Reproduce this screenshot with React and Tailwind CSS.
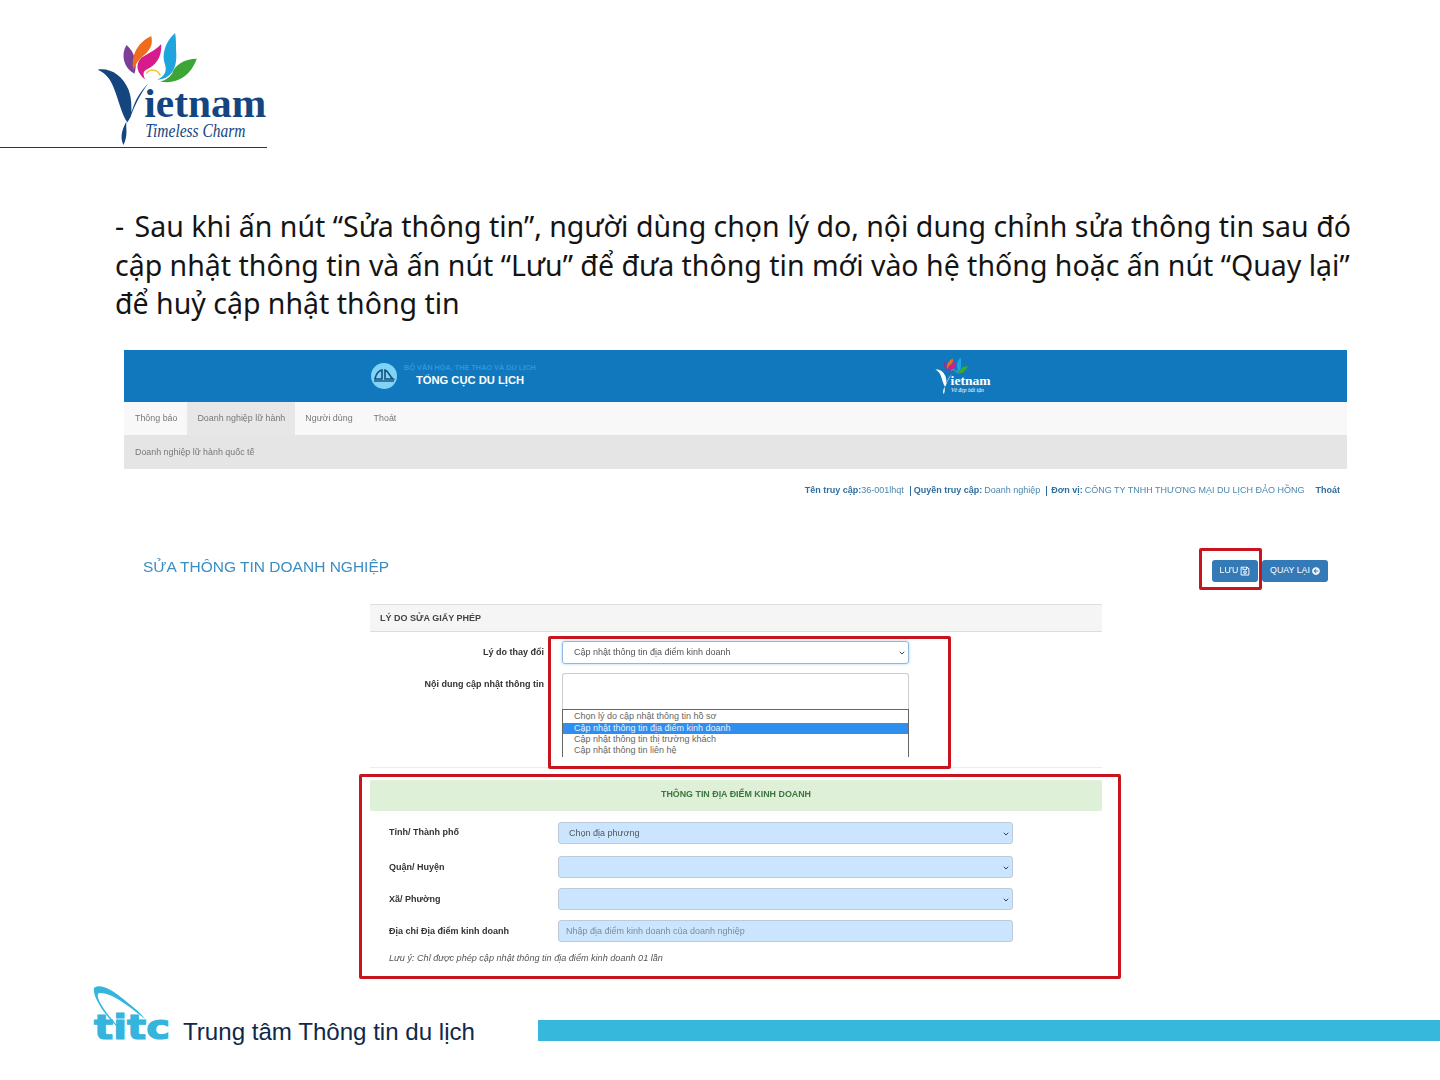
import React from "react";
import { FaArrowCircleLeft, FaRegSave } from "react-icons/fa";
import { ChevronDown } from "lucide-react";

function Petals() {
  return (
    <g>
      <path d="M126 45C120 55 123 68 134 74C137 66 135 52 126 45Z" fill="#7b3f98" />
      <path d="M133 70C130 55 138 42 151 36C153 45 150 50 143 56C138 60 135 65 133 70Z" fill="#ef6c1f" />
      <path d="M145 80C137 74 134 65 141 58C149 53 157 49 161 44C162 58 155 66 146 70C142 72 143 76 145 80Z" fill="#d81b8c" />
      <path d="M175 33C165 42 161 55 165 65C167 72 164 77 157 80C170 80 178 70 176 50C176 43 176 38 175 33Z" fill="#1ea5de" />
      <path d="M197 59C184 59 174 66 172 74C169 78 165 81 160 82C175 85 190 78 197 59Z" fill="#3ba535" />
      <path d="M146 74C150 68 158 70 160 76" fill="none" stroke="#f2c230" strokeWidth="1.6" />
    </g>
  );
}

function Logo({ color, width, height, tagline, tagSize }) {
  return (
    <svg viewBox="96 32 172 116" width={width} height={height} className="block shrink-0">
      <Petals />
      <path d="M97 70C110 68 122 76 128 90C131 98 131 105 131 113C135 100 140 92 148 84C141 93 134 106 130 118L127 123C122 118 118 100 113 88C110 79 104 73 97 70Z" fill={color} />
      <path d="M126 122C125 130 128 135 123 146C120 140 120 133 126 122Z" fill={color} />
      <text x="144" y="118" fontSize="41" fontWeight="700" fontFamily="'Liberation Serif', serif" fill={color} textLength="123" lengthAdjust="spacingAndGlyphs">ietnam</text>
      <text x="145" y="138" fontSize={tagSize} fontStyle="italic" fontFamily="'Liberation Serif', serif" fill={color} textLength="101" lengthAdjust="spacingAndGlyphs">{tagline}</text>
    </svg>
  );
}

function Chevron() {
  return <ChevronDown size={8} strokeWidth={3} className="text-[#334455] shrink-0" />;
}

function GreenRow({ label, className, labelClass, value, input }) {
  return (
    <div className={`flex items-center ${className}`}>
      <div className={`w-[169px] text-[9px] font-bold text-[#333] ${labelClass}`}>{label}</div>
      <div className="flex h-[22px] w-[455px] items-center justify-between rounded-[3px] border border-[#bccad9] bg-[#cce5ff] pr-[2px] pt-[2px] text-[9px]">
        {input ? (
          <span className="pl-[7px] text-[#7d8c9c]">{value}</span>
        ) : (
          <>
            <span className="pl-[10px] text-[#555]">{value}</span>
            <Chevron />
          </>
        )}
      </div>
    </div>
  );
}

export default function App() {
  return (
    <div className="relative h-[1080px] w-[1440px] overflow-hidden bg-white font-['Liberation_Sans',sans-serif]">
      {/* slide header */}
      <div className="h-[148px] w-[267px] border-b border-[#1d3a5c] pl-[96px] pt-[32px]">
        <Logo color="#14457f" width={172} height={115} tagline="Timeless Charm" tagSize="18" />
      </div>

      {/* slide text */}
      <div className="ml-[115px] mt-[59px] font-['Noto_Sans',sans-serif] text-[28.5px] leading-[38.5px] text-[#141414]">
        <div className="whitespace-nowrap"><span className="mr-[3px]">-</span> Sau khi ấn nút “Sửa thông tin”, người dùng chọn lý do, nội dung chỉnh sửa thông tin sau đó</div>
        <div className="whitespace-nowrap">cập nhật thông tin và ấn nút “Lưu” để đưa thông tin mới vào hệ thống hoặc ấn nút “Quay lại”</div>
        <div className="whitespace-nowrap">để huỷ cập nhật thông tin</div>
      </div>

      {/* embedded screenshot */}
      <div className="ml-[124px] mt-[27px] w-[1223px] blur-[0.3px]">
        <div className="flex h-[52px] items-center bg-[#1178be] pl-[247px]">
          <div className="flex h-[26px] w-[26px] shrink-0 items-center justify-center rounded-full bg-[#7ed3f6]">
            <svg viewBox="0 0 26 26" width="26" height="26">
              <path d="M4 16C5 11 7 8 11 7V16ZM14 7C18 8 18 13 22 16H14Z" fill="none" stroke="#14507f" strokeWidth="1.6" />
              <path d="M3 18H23" stroke="#14507f" strokeWidth="1.4" />
            </svg>
          </div>
          <div className="ml-[7px] w-[132px] text-center">
            <div className="whitespace-nowrap text-[7.3px] font-bold leading-[8px] text-[#2a97e0]">BỘ VĂN HÓA, THỂ THAO VÀ DU LỊCH</div>
            <div className="mt-[2px] whitespace-nowrap text-[11.2px] font-bold leading-[13px] text-white">TỔNG CỤC DU LỊCH</div>
          </div>
          <div className="ml-[399px]">
            <Logo color="#ffffff" width={56} height={38} tagline="Vẻ đẹp bất tận" tagSize="16" />
          </div>
        </div>

        <div className="flex h-[33px] items-center bg-[#f8f8f8] text-[8.9px] text-[#777]">
          <div className="flex h-full items-center pl-[11px] pr-[10px] pt-[2px]">Thông báo</div>
          <div className="flex h-full items-center bg-[#e7e7e7] px-[10px] pt-[2px]">Doanh nghiệp lữ hành</div>
          <div className="flex h-full items-center pl-[10px] pr-[11px] pt-[2px]">Người dùng</div>
          <div className="flex h-full items-center px-[10px] pt-[2px]">Thoát</div>
        </div>
        <div className="flex h-[34px] items-center bg-[#e5e5e5] pl-[11px] pt-[2px] text-[8.9px] text-[#777]">Doanh nghiệp lữ hành quốc tế</div>

        <div className="mt-[14px] flex h-[14px] items-center justify-end whitespace-nowrap pr-[7px] pt-[3px] text-[9px] text-[#4a87ad]">
          <span className="font-bold text-[#2f6f9f]">Tên truy cập:</span>
          <span>36-001lhqt</span>
          <span className="ml-[6px] mr-[3px] h-[10px] w-px bg-[#2f6f9f]" />
          <span className="mr-[2px] font-bold text-[#2f6f9f]">Quyền truy cập:</span>
          <span>Doanh nghiệp</span>
          <span className="ml-[6px] mr-[4px] h-[10px] w-px bg-[#2f6f9f]" />
          <span className="mr-[2px] font-bold text-[#2f6f9f]">Đơn vị:</span>
          <span>CÔNG TY TNHH THƯƠNG MẠI DU LỊCH ĐẢO HỒNG</span>
          <span className="ml-[11px] font-bold text-[#2f6f9f]">Thoát</span>
        </div>

        <div className="mt-[63px] flex h-[22px] justify-between pl-[19px] pr-[19px]">
          <div className="mt-[-4px] text-[15.5px] leading-[22px] text-[#3c8dc4]">SỬA THÔNG TIN DOANH NGHIỆP</div>
          <div className="flex gap-[4px]">
            <div className="flex h-[22px] w-[46px] items-center justify-center gap-[2px] rounded-[3px] bg-[#337ab7] text-[8.8px] text-white">
              LƯU <FaRegSave size={10} />
            </div>
            <div className="flex h-[22px] w-[66px] items-center justify-center gap-[2px] rounded-[3px] bg-[#337ab7] text-[8.8px] text-white">
              QUAY LẠI <FaArrowCircleLeft size={8} />
            </div>
          </div>
        </div>

        {/* reason card */}
        <div className="ml-[246px] mt-[22px] w-[732px]">
          <div className="h-[164px] border-b border-[#ececec]">
            <div className="flex h-[28px] items-center border-y border-[#dddddd] bg-[#f5f5f5] pl-[10px] pt-[2px] text-[9px] font-bold text-[#444]">LÝ DO SỬA GIẤY PHÉP</div>
            <div className="mt-[9px] flex">
              <div className="flex h-[23px] w-[174px] items-center justify-end pt-[2px] text-[9px] font-bold text-[#333]">Lý do thay đổi</div>
              <div className="ml-[18px] flex h-[23px] w-[347px] items-center justify-between rounded-[3px] border border-[#8fb8dc] pl-[11px] pr-[2px] pt-[2px] text-[9px] text-[#555] shadow-[0_0_3px_rgba(102,175,233,0.6)]">
                Cập nhật thông tin địa điểm kinh doanh
                <Chevron />
              </div>
            </div>
            <div className="mt-[9px] flex">
              <div className="w-[174px] pt-[6px] text-right text-[9px] font-bold leading-[10px] text-[#333]">Nội dung cập nhật thông tin</div>
              <div className="relative ml-[18px] h-[84px] w-[347px] rounded-t-[3px] border border-b-0 border-[#cccccc]">
                <div className="absolute inset-x-[-1px] bottom-0 h-[48px] border-x border-t border-[#666] bg-white pt-[1px] text-[9px] leading-[11px] text-[#666]">
                  <div className="pl-[11px]">Chọn lý do cập nhật thông tin hồ sơ</div>
                  <div className="mt-[1px] bg-[#2e8fef] pl-[11px] text-[#e8f2ff]">Cập nhật thông tin địa điểm kinh doanh</div>
                  <div className="pl-[11px]">Cập nhật thông tin thị trường khách</div>
                  <div className="pl-[11px]">Cập nhật thông tin liên hệ</div>
                </div>
              </div>
            </div>
          </div>

          {/* business location */}
          <div className="mt-[12px] flex h-[31px] items-center justify-center rounded-[2px] bg-[#dff0d8] text-[8.9px] font-bold text-[#3c763d]">THÔNG TIN ĐỊA ĐIỂM KINH DOANH</div>
          <div className="pl-[19px]">
            <GreenRow className="mt-[11px]" labelClass="pt-0" label="Tỉnh/ Thành phố" value="Chọn địa phương" />
            <GreenRow className="mt-[12px]" labelClass="pt-[2px]" label="Quận/ Huyện" />
            <GreenRow className="mt-[10px]" labelClass="pt-[2px]" label="Xã/ Phường" />
            <GreenRow className="mt-[10px]" labelClass="pt-[2px]" label="Địa chỉ Địa điểm kinh doanh" value="Nhập địa điểm kinh doanh của doanh nghiệp" input />
            <div className="mt-[11px] text-[9.1px] italic leading-[11px] text-[#555]">Lưu ý: Chỉ được phép cập nhật thông tin địa điểm kinh doanh 01 lần</div>
          </div>
        </div>
      </div>

      {/* highlight frames drawn on top of the screenshot */}
      <div className="absolute left-[1199px] top-[548px] h-[42px] w-[63px] rounded-[2px] border-[3px] border-[#c8141c]" />
      <div className="absolute left-[548px] top-[636px] h-[133px] w-[403px] rounded-[2px] border-[3px] border-[#c8141c]" />
      <div className="absolute left-[359px] top-[774px] h-[205px] w-[762px] rounded-[2px] border-[3px] border-[#c8141c]" />

      {/* slide footer */}
      <div className="absolute left-[90px] right-0 top-[985px] flex h-[60px] items-start">
        <svg viewBox="90 985 84 60" width="84" height="60" className="block shrink-0">
          <path d="M94 988C100 983 112 990 122 998C132 1006 140 1012 145 1019C135 1011 122 1001 112 996C105 993 99 992 98 994C96 998 104 1012 124 1033C108 1020 92 998 94 988Z" fill="#35b4de" />
          <text x="94" y="1039" fontSize="33" fontWeight="700" fontFamily="'DejaVu Sans', sans-serif" fill="#35b4de" stroke="#35b4de" strokeWidth="1.2" textLength="76" lengthAdjust="spacingAndGlyphs">titc</text>
        </svg>
        <div className="ml-[9px] mt-[32px] w-[355px] whitespace-nowrap text-[24.1px] leading-[30px] text-[#10294a]">Trung tâm Thông tin du lịch</div>
        <div className="mt-[35px] h-[21px] flex-1 bg-[#35b8dc]" />
      </div>
    </div>
  );
}
